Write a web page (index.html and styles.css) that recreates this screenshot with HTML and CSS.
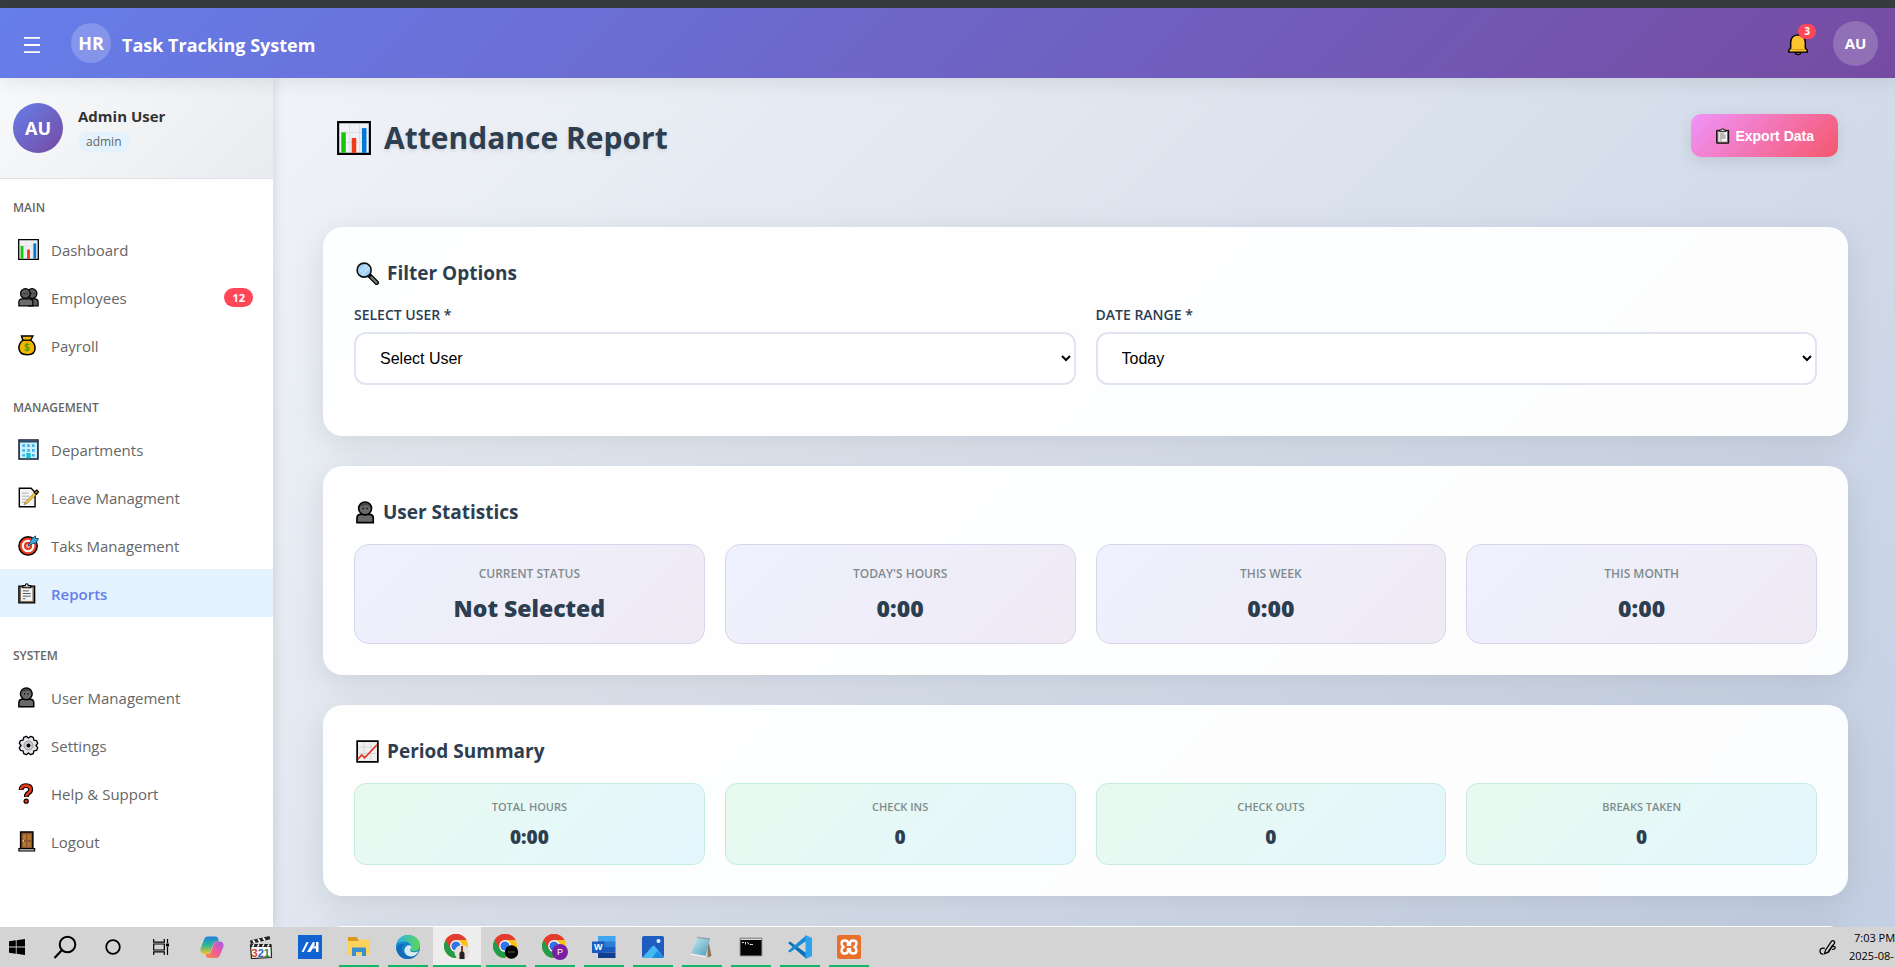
FILE: index.html
```html
<!DOCTYPE html>
<html lang="en">
<head>
<meta charset="utf-8">
<title>Attendance Report</title>
<link rel="stylesheet" href="styles.css">
</head>
<body>
<svg class="sprite" aria-hidden="true">
  <defs>
    <linearGradient id="g-edge" x1="0" y1="0" x2="1" y2="1"><stop offset="0" stop-color="#1b9de2"/><stop offset="1" stop-color="#0c59a4"/></linearGradient>
    <linearGradient id="g-edge2" x1="0" y1="0" x2="1" y2="0"><stop offset="0" stop-color="#2bb3e6"/><stop offset="1" stop-color="#5fd65a"/></linearGradient>
    <linearGradient id="g-cop1" x1="0" y1="0" x2="0" y2="1"><stop offset="0" stop-color="#1d7fe0"/><stop offset=".5" stop-color="#2fb98f"/><stop offset="1" stop-color="#f4c32c"/></linearGradient>
    <linearGradient id="g-cop2" x1="1" y1="0" x2="0" y2="1"><stop offset="0" stop-color="#a55bf0"/><stop offset=".5" stop-color="#ee5c9b"/><stop offset="1" stop-color="#f98b3c"/></linearGradient>
    <linearGradient id="g-note" x1="0" y1="0" x2="1" y2="1"><stop offset="0" stop-color="#c9ecf5"/><stop offset="1" stop-color="#4a9bb5"/></linearGradient>
  </defs>
  <symbol id="i-bars" viewBox="0 0 24 24"><path d="M.8.8h22.400v22.400H.8z" fill="#f0f2f6" stroke="#000" stroke-width="1.500"/><path d="M2 8h20M2 15h20M9 2v20M16 2v20" stroke="#dadde3" stroke-width=".7"/><path d="M3 8h3.200v14.500H3z" fill="#16c60c"/><path d="M10.400 12h3.200v10.500h-3.200z" fill="#f03a17"/><path d="M17.600 5h3.200v17.500h-3.200z" fill="#0078d7"/></symbol>
  <symbol id="i-users" viewBox="0 0 24 24"><g fill="#5b5b5b" stroke="#000" stroke-width="1.400"><circle cx="16" cy="7.500" r="5.600"/><path d="M12 21.500V17q0-3.500 3.500-3.500H19q4 0 4 4v4z"/><circle cx="8.500" cy="7.500" r="5.600"/><path d="M1 21.500v-4q0-4 4-4h8q4 0 4 4v4z" fill="#6c6c6c"/></g><path d="M7 7v1M10.500 7v1M15.500 7v1M18.500 7v1" stroke="#000" stroke-width="1.200"/></symbol>
  <symbol id="i-user" viewBox="2 0 24 24"><g fill="#696969" stroke="#000" stroke-width="1.700"><path d="M3 22.500V18q0-4 4-4h9q4 0 4 4v4.500z"/><circle cx="11.500" cy="7.800" r="6.700"/></g><path d="M5.500 6q2-4 6-4t6 5l-3.500-3z" fill="#444"/><path d="M9.500 7v1.600M13.500 7v1.600" stroke="#000" stroke-width="1.400"/></symbol>
  <symbol id="i-money" viewBox="1 0 24 24"><path d="M6.500 6 5 1.200h13L15.500 6q5 3.500 5 9 0 7.500-9 7.500t-9.500-7.500Q2 9.500 6.500 6z" fill="#f4b400" stroke="#000" stroke-width="1.700"/><path d="M6.500 6h9" stroke="#000" stroke-width="1.500"/><path d="M14 11.500q-1-1.500-3-1.300-2.200.4-2 2 .3 1.300 2.300 1.600 2.600.4 2.500 2.100-.3 1.800-2.700 1.700-1.800 0-2.600-1.400M11.200 8.800v10" fill="none" stroke="#3a9a14" stroke-width="1.200"/></symbol>
  <symbol id="i-building" viewBox="0 0 24 24"><path d="M1.200 1.200h21.600v21.600H1.200z" fill="#cdeefc" stroke="#111c35" stroke-width="1.800"/><path d="M2 2h20v2H2z" fill="#28486c"/><path d="M5 6h3v3H5zm5.500 0h3v3h-3zM16 6h3v3h-3zM5 11.500h3v3H5zm5.500 0h3v3h-3zm5.500 0h3v3h-3zM5 17h3v3H5zm11 0h3v3h-3z" fill="#3fb5ee"/><path d="M9.500 16h5v6h-5z" fill="#15c3cf"/></symbol>
  <symbol id="i-memo" viewBox="0 0 24 24"><path d="M1.500 1.500H15L19.500 6v16.500h-18z" fill="#f5f5f5" stroke="#000" stroke-width="1.600"/><path d="M4.500 7H12M4.500 10.500H13M4.500 14H11M4.500 17.500H9" stroke="#aaa" stroke-width="1"/><path d="M8 17.500 20 5.500 22 7.500 10 19 7 20z" fill="#f6cf3e" stroke="#7a5c14" stroke-width=".7"/><path d="m18.500 6 3-2.500 2 2L21 8.500z" fill="#d9822b" stroke="#000" stroke-width="1.300"/></symbol>
  <symbol id="i-target" viewBox="0 0 24 24"><circle cx="11.500" cy="12.500" r="10.500" fill="#e93a20" stroke="#000" stroke-width="1.600"/><circle cx="11.500" cy="12.500" r="7.200" fill="#fff"/><circle cx="11.500" cy="12.500" r="4.700" fill="#e93a20"/><circle cx="11.500" cy="12.500" r="2" fill="#fff"/><path d="m11 13 5-9 4-3v3h3.500l-3 5-4 1z" fill="#35a8dd" stroke="#17445e" stroke-width="1"/></symbol>
  <symbol id="i-clip" viewBox="1 0 24 24"><path d="M2 3.500h18v19.300H2z" fill="#7d6a5a" stroke="#000" stroke-width="1.500"/><path d="M4.500 5.500h13v15h-13z" fill="#f5f5f5"/><path d="M6.500 5.500V3h2.700q.2-2.200 1.800-2.200T12.800 3h2.700v2.500z" fill="#ccc" stroke="#000" stroke-width="1.200"/><path d="M6.500 9h7M6.500 12h9M6.500 15h9M6.500 18h3" stroke="#555" stroke-width="1.100"/></symbol>
  <symbol id="i-gear" viewBox="0 0 24 24"><path d="m9.500 1.500 2.500 2 2.500-2 3 1.200.6 3.100 3.200.700L22.500 9.500l-2 2.500 2 2.500-1.200 3-3.200.7-.6 3.100-3 1.200-2.500-2-2.500 2-3-1.200-.7-3.100-3.100-.7-1.200-3 2-2.500-2-2.500 1.200-3 3.100-.7.700-3.100z" fill="#e2e4e7" stroke="#000" stroke-width="1.500" stroke-linejoin="round"/><circle cx="12" cy="12" r="5.200" fill="#c9ccd1" stroke="#888" stroke-width=".9"/><circle cx="12" cy="12" r="2.300"/></symbol>
  <symbol id="i-help" viewBox="2 0 24 24"><path d="M5.500 8q0-5 5.500-5t5.500 4.500q0 2.500-2.700 4-2.300 1.300-2.300 4.500" fill="none" stroke="#000" stroke-width="5.600"/><circle cx="11.300" cy="20.800" r="3"/><path d="M5.500 7.500q.2-4.500 5.500-4.500t5.500 4.500q0 2.500-2.700 4-2.300 1.300-2.300 3.800" fill="none" stroke="#e8391c" stroke-width="3"/><circle cx="11.300" cy="20.800" r="1.700" fill="#e8391c"/></symbol>
  <symbol id="i-door" viewBox="1 0 24 24"><path d="M4 1.200h14v19H4z" fill="#8e562e" stroke="#000" stroke-width="1.700"/><path d="M6.500 4h3.700v6H6.500zm5.300 0h3.700v6h-3.700zM6.500 12.500h3.700v5.500H6.500zm5.300 0h3.700v5.500h-3.700z" fill="#b57a2a"/><circle cx="7" cy="11.200" r="1" fill="#ffd34d"/><path d="M2 20h18v2.800H2z" fill="#aaa" stroke="#000" stroke-width="1.300"/></symbol>
  <symbol id="i-search" viewBox="0 0 24 24"><path d="m14 14 7.500 7.500" stroke="#000" stroke-width="5" stroke-linecap="round"/><path d="m16 16 5.500 5.500" stroke="#6b7a6f" stroke-width="2.400" stroke-linecap="round"/><circle cx="8.500" cy="8.500" r="7.300" fill="#9fd0f5" stroke="#111" stroke-width="1.700"/><path d="m3.500 11 8-8M6 13.500l8-8" stroke="#c9e5fa" stroke-width="1.500"/></symbol>
  <symbol id="i-trend" viewBox="0 0 24 24"><path d="M1.200 1.200h21.600v21.600H1.200z" fill="#f0f0f0" stroke="#000" stroke-width="1.800"/><path d="M2 7.500h20M2 14h20M8.500 2v20M15.500 2v20" stroke="#d5d5d5" stroke-width="1"/><path d="m2 20 4-4.500 3 3L22 5" fill="none" stroke="#e3311d" stroke-width="1.700"/></symbol>
  <symbol id="i-bell" viewBox="0 0 24 24"><path d="M9 20.500q0 2.500 3 2.500t3-2.500z" fill="#b5720d" stroke="#000" stroke-width="1.300"/><path d="M2 20.300v-2l2-2.300V9.500Q4.500 2 12 1.500 19.500 2 20 9.500V16l2 2.300v2z" fill="#fdc42f" stroke="#000" stroke-width="1.600"/><path d="M3.500 17.500h17" stroke="#d69a16" stroke-width="1.200"/></symbol>
  <symbol id="i-chrome" viewBox="0 0 24 24"><circle cx="12" cy="12" r="12" fill="#fbc116"/><path d="M12 12 1.600 6A12 12 0 0 1 22.400 6z" fill="#e33b2e"/><path d="M12 12 1.600 6A12 12 0 0 0 12 24l5.200-9z" fill="#229b4b"/><path d="M12 6h10.400L17 14.500z" fill="#fbc116"/><path d="M12 6.200V6h10.400A12 12 0 0 0 1.600 6l5.200 9z" fill="#e33b2e"/><circle cx="12" cy="12" r="5.900" fill="#fff"/><circle cx="12" cy="12" r="4.600" fill="#2f75e4"/></symbol>
</svg>

<div class="app">
  <div class="window-edge"></div>
  <header class="topbar">
    <button class="menu-button" type="button" aria-label="Toggle menu"><svg viewBox="0 0 20 20"><path d="M1 2h18M1 10h18M1 18h18" stroke="#fff" stroke-width="2"/></svg></button>
    <span class="logo">HR</span>
    <span class="brand">Task Tracking System</span>
    <div class="topbar-actions">
      <button class="bell-button" type="button" aria-label="Notifications"><svg><use href="#i-bell"/></svg><span class="bell-count">3</span></button>
      <button class="account-button" type="button">AU</button>
    </div>
  </header>

  <div class="body">
    <aside class="sidebar">
      <div class="profile">
        <span class="profile-avatar">AU</span>
        <div class="profile-text"><span class="profile-name">Admin User</span><span class="profile-role">admin</span></div>
      </div>
      <nav class="nav">
        <section class="nav-section">
          <h2 class="nav-title">MAIN</h2>
          <a class="nav-link" href="#"><svg><use href="#i-bars"/></svg>Dashboard</a>
          <a class="nav-link" href="#"><svg><use href="#i-users"/></svg>Employees<span class="nav-badge">12</span></a>
          <a class="nav-link" href="#"><svg><use href="#i-money"/></svg>Payroll</a>
        </section>
        <section class="nav-section">
          <h2 class="nav-title">MANAGEMENT</h2>
          <a class="nav-link" href="#"><svg><use href="#i-building"/></svg>Departments</a>
          <a class="nav-link" href="#"><svg><use href="#i-memo"/></svg>Leave Managment</a>
          <a class="nav-link" href="#"><svg><use href="#i-target"/></svg>Taks Management</a>
          <a class="nav-link active" href="#"><svg><use href="#i-clip"/></svg>Reports</a>
        </section>
        <section class="nav-section">
          <h2 class="nav-title">SYSTEM</h2>
          <a class="nav-link" href="#"><svg><use href="#i-user"/></svg>User Management</a>
          <a class="nav-link" href="#"><svg><use href="#i-gear"/></svg>Settings</a>
          <a class="nav-link" href="#"><svg><use href="#i-help"/></svg>Help &amp; Support</a>
          <a class="nav-link" href="#"><svg><use href="#i-door"/></svg>Logout</a>
        </section>
      </nav>
    </aside>

    <main class="main">
      <div class="page-head">
        <h1 class="page-title"><svg><use href="#i-bars"/></svg>Attendance Report</h1>
        <button class="export-button" type="button"><svg><use href="#i-clip"/></svg>Export Data</button>
      </div>

      <section class="card">
        <h2 class="card-title"><svg><use href="#i-search"/></svg>Filter Options</h2>
        <div class="filters">
          <div class="field"><label for="user">SELECT USER *</label><select id="user"><option>Select User</option></select></div>
          <div class="field"><label for="range">DATE RANGE *</label><select id="range"><option>Today</option></select></div>
        </div>
      </section>

      <section class="card">
        <h2 class="card-title person"><svg><use href="#i-user"/></svg>User Statistics</h2>
        <div class="tiles">
          <div class="tile"><span class="tile-label">CURRENT STATUS</span><span class="tile-value">Not Selected</span></div>
          <div class="tile"><span class="tile-label">TODAY'S HOURS</span><span class="tile-value">0:00</span></div>
          <div class="tile"><span class="tile-label">THIS WEEK</span><span class="tile-value">0:00</span></div>
          <div class="tile"><span class="tile-label">THIS MONTH</span><span class="tile-value">0:00</span></div>
        </div>
      </section>

      <section class="card">
        <h2 class="card-title"><svg><use href="#i-trend"/></svg>Period Summary</h2>
        <div class="tiles">
          <div class="tile summary"><span class="tile-label">TOTAL HOURS</span><span class="tile-value">0:00</span></div>
          <div class="tile summary"><span class="tile-label">CHECK INS</span><span class="tile-value">0</span></div>
          <div class="tile summary"><span class="tile-label">CHECK OUTS</span><span class="tile-value">0</span></div>
          <div class="tile summary"><span class="tile-label">BREAKS TAKEN</span><span class="tile-value">0</span></div>
        </div>
      </section>

      <section class="card"></section>
    </main>
  </div>

  <footer class="taskbar">
    <div class="task-system">
      <button class="task" type="button" aria-label="Start"><svg class="s16" viewBox="0 0 16 16"><path d="M0 2.300 6.800 1.300v6.200H0zM7.600 1.200 16 0v7.500H7.600zM0 8.400h6.800v6.300L0 13.700zM7.600 8.400H16V16l-8.400-1.200z"/></svg></button>
      <button class="task" type="button" aria-label="Search"><svg viewBox="0 0 24 24"><circle cx="14.500" cy="9.500" r="7.800" fill="none" stroke="#000" stroke-width="2"/><path d="m9 15-7.500 8" stroke="#000" stroke-width="2.200"/></svg></button>
      <button class="task" type="button" aria-label="Assistant"><svg class="s16" viewBox="0 0 16 16"><circle cx="8" cy="8" r="6.800" fill="none" stroke="#000" stroke-width="1.800"/></svg></button>
      <button class="task" type="button" aria-label="Task view"><svg class="s16" viewBox="0 0 16 16"><path d="M.7 0v3.200h10.600V0M.7 16v-3.200h10.600V16M.7 5h10.600v6H.7zM14.500 0v4M14.500 8v8" fill="none" stroke="#000" stroke-width="1.200"/><path d="M13 4.500h3v3h-3z"/></svg></button>
    </div>
    <div class="task-apps">
      <button class="task" type="button" aria-label="Copilot"><svg viewBox="0 0 24 24"><path d="M8 1.500h7.500q2 0 2.600 2L19 6.500h-2.500q-2.500 0-3.300 2.500l-2.400 7.500q-.8 2.500-3.300 2.500H4Q0 18.500.5 14L4 4.500Q5 1.500 8 1.500z" fill="url(#g-cop1)"/><path d="M16 23H8.500q-2 0-2.600-2L5.500 19H8q2.500 0 3.300-2.500l2.200-7.500q.8-2.500 3.300-2.500H20q4 .5 3.500 5L20 20q-1 3-4 3z" fill="url(#g-cop2)"/></svg></button>
      <button class="task" type="button" aria-label="Media player"><svg viewBox="0 0 24 24"><path d="M1.500 10h20.500l.5 12.500-20 1z" fill="#fff" stroke="#222" stroke-width="1.200"/><path d="M1 5.500 20.500 1l.7 3.200L1.800 9z" fill="#222"/><path d="m4 5 2 3M9 3.800l2 3M14 2.600l2 3" stroke="#fff" stroke-width="1.800"/><path d="M1.500 9h20.700v3H1.500z" fill="#222"/><path d="m5 9.300-1.500 2.400M10 9.300l-1.500 2.400M15 9.300l-1.500 2.400M20 9.300l-1.500 2.400" stroke="#fff" stroke-width="1.600"/><text x="2.500" y="21.500" font-size="11" font-weight="700" font-family="Liberation Sans, sans-serif"><tspan fill="#d8401f">3</tspan><tspan fill="#2b62c4">2</tspan><tspan fill="#1d8d48">1</tspan></text></svg></button>
      <button class="task" type="button" aria-label="MyASUS"><svg viewBox="0 0 24 24"><path d="M0 0h24v24H0z" fill="#1262d2"/><path d="m3.500 17 5-10h2.200l-5 10zM9 17l6-10h1.500v3.500L12.500 17zM18 7h2.500v10H18v-3.500h-3l1.500-2.200H18z" fill="#fff"/></svg></button>
      <button class="task open" type="button" aria-label="File Explorer"><svg viewBox="0 0 24 24"><path d="M1 2h8.500l2 3H22v5H1z" fill="#d99a1d"/><path d="M1 6h10l1.500-1.500H23V20H1z" fill="#fbd25a"/><path d="M5 21v-7.500q0-1 1-1h12q1 0 1 1V21h-4v-4H9v4z" fill="#3a8fd2"/></svg></button>
      <button class="task open" type="button" aria-label="Edge"><svg viewBox="0 0 24 24"><circle cx="12" cy="12" r="12" fill="url(#g-edge)"/><path d="M1 8Q4 0 12 0q11 .5 12 10 0 6-6 6.500-4.500 0-4-2.200 1.800-1.500 1-3.800Q13.500 7 9 6.500 4 6 1 8z" fill="url(#g-edge2)"/><path d="M14 14.300q-.8 3 4.500 3 2.500-.2 4.200-1.300-2 4.700-6.500 5.500-5.500.5-7.700-4.500-1-4 3-6.500 2.700-1 3.800 1 .4 1.600-1.300 2.800z" fill="#d6eaf2"/><path d="M8.500 9Q4 12 6.500 17.500 9 22.500 15 23.500 4 26 .5 15-.5 8 8.500 9z" fill="#136bbb"/></svg></button>
      <button class="task open current" type="button" aria-label="Chrome"><svg class="s26" viewBox="0 0 26 26"><svg width="24" height="24"><use href="#i-chrome"/></svg><circle cx="18" cy="18.500" r="7.500" fill="#e7dfdc"/><path d="M15.500 25v-6l2.500-3 2.500 3v6z" fill="#222"/><path d="M18 12v6" stroke="#7b3f2a" stroke-width="2"/></svg></button>
      <button class="task open" type="button" aria-label="Chrome, second profile"><svg class="s26" viewBox="0 0 26 26"><svg width="24" height="24"><use href="#i-chrome"/></svg><circle cx="18.500" cy="18" r="6.700" fill="#050505"/><path d="M15 18h7" stroke="#777" stroke-width="1.200" stroke-dasharray="1.500 .6"/></svg></button>
      <button class="task open" type="button" aria-label="Chrome, third profile"><svg class="s26" viewBox="0 0 26 26"><svg width="24" height="24"><use href="#i-chrome"/></svg><circle cx="18" cy="18" r="8" fill="#7b1fa2"/><text x="18" y="21.300" text-anchor="middle" font-size="9" fill="#fff" font-family="Liberation Sans, sans-serif">P</text></svg></button>
      <button class="task open" type="button" aria-label="Word"><svg viewBox="0 0 24 24"><path d="M6 1h17.500v6H6z" fill="#41a5ee"/><path d="M6 6.500h17.500V12H6z" fill="#2b7cd3"/><path d="M6 12h17.500v5.500H6z" fill="#185abd"/><path d="M6 17.500h17.500V23H6z" fill="#103f91"/><path d="M0 6.500h12.500V18H0z" fill="#1b5cbe"/><text x="6.200" y="15.400" text-anchor="middle" font-size="9" font-weight="700" fill="#fff" font-family="Liberation Sans, sans-serif">W</text></svg></button>
      <button class="task open" type="button" aria-label="Photos"><svg viewBox="0 0 24 24"><rect x="1" y="1" width="22" height="22" rx="2" fill="#1f5cc0"/><path d="m2 22 9-10.500q1.500-1.500 3 0L22.500 22q-.5 1-1.500 1H3q-1 0-1-1z" fill="#43b8f3"/><path d="m11 23 5-7 6.500 6-1 1z" fill="#1f8ddd"/><circle cx="17.500" cy="6" r="2" fill="#e5f4ff"/></svg></button>
      <button class="task open" type="button" aria-label="Notepad"><svg viewBox="0 0 24 24"><path d="m18 4 3.500 17-4 1.500z" fill="#8a7758"/><path d="M7.500 2.500 20 4l-4.500 17L1 18.500z" fill="url(#g-note)"/><path d="M1 18.500 15.500 21l-.3 1.300L1 19.800z" fill="#f2f2f2"/><path d="m7.500 2.500 12.500 1.500" stroke="#777" stroke-width="1.500" stroke-dasharray="1 1"/></svg></button>
      <button class="task open" type="button" aria-label="Command Prompt"><svg viewBox="0 0 24 24"><path d="M1 3h22v18H1z" fill="#050505" stroke="#999" stroke-width="1"/><path d="M1.500 3.500h21V5h-21z" fill="#ddd"/><path d="M3 7.500h2M6.500 7v2.500M8.500 7l1.500 2.500M11 9.500h3" stroke="#ddd" stroke-width="1"/></svg></button>
      <button class="task open" type="button" aria-label="Visual Studio Code"><svg viewBox="0 0 24 24"><path d="m0 8 2-1.500L18 18v5.500z" fill="#0b70b8"/><path d="m0 16 2 1.500L18 6V.5z" fill="#1a8ad4"/><path d="m17.500 0 6.500 3v18l-6.500 3z" fill="#2ba3ee"/></svg></button>
      <button class="task open" type="button" aria-label="XAMPP"><svg viewBox="0 0 24 24"><rect width="24" height="24" rx="2.500" fill="#e9702a"/><path d="M8 5.500q-3.500 0-3.500 3 0 2 2 3.500-2 1.500-2 3.500 0 3 3.500 3 3 0 3-3v-1.200h2v1.200q0 3 3 3 3.500 0 3.500-3 0-2-2-3.500 2-1.500 2-3.500 0-3-3.500-3-3 0-3 3v1.200h-2V8.500q0-3-3-3z" fill="none" stroke="#fff" stroke-width="2.400"/></svg></button>
    </div>
    <div class="tray">
      <button class="ink-button" type="button" aria-label="Ink workspace"><svg viewBox="0 0 16 16"><path d="m5.200 13.800.9-3.300 5.400-8q1.200-1.500 2.500-.6 1.200 1 .3 2.500l-5.400 8zM5.500 8.800Q.9 8 .9 11.500q.2 2.800 3.100 2.700M8.200 12.500 13 5.500M12.500 7q3-.5 2.700 1.300-.3 1.700-2.900 1.500" fill="none" stroke="#000" stroke-width="1.200"/></svg></button>
      <div class="clock"><span class="clock-time">7:03 PM</span><span>2025-08-</span></div>
    </div>
  </footer>
</div>
</body>
</html>
```

FILE: styles.css
```css
* { box-sizing: border-box; }

body {
  margin: 0;
  font-family: "Open Sans", "Noto Sans", sans-serif;
  color: #2c3e50;
}

h1, h2 { margin: 0; }
button { border: 0; padding: 0; background: none; font: inherit; color: inherit; cursor: pointer; }
svg { display: block; flex: none; }
.sprite { position: absolute; width: 0; height: 0; }

.app { display: flex; flex-direction: column; height: 100vh; overflow: hidden; }
.window-edge { flex: none; height: 8px; background: #363d3f; }

/* Top bar */
.topbar {
  flex: none;
  display: flex;
  align-items: center;
  height: 70px;
  padding: 0 17px 0 22px;
  background: linear-gradient(135deg, #667eea 0%, #764ba2 100%);
  box-shadow: 0 2px 20px rgba(0, 0, 0, 0.1);
  color: #fff;
  z-index: 2;
}
.menu-button { padding-top: 3px; }
.menu-button svg { width: 20px; height: 18px; }
.logo {
  display: grid;
  place-items: center;
  width: 40px;
  height: 40px;
  margin-left: 29px;
  border-radius: 50%;
  background: rgba(255, 255, 255, 0.2);
  font-size: 18px;
  font-weight: 700;
}
.brand { margin-left: 11px; padding-top: 3px; font-size: 18px; font-weight: 700; }
.topbar-actions { display: flex; align-items: center; gap: 24px; margin-left: auto; }
.bell-button { position: relative; padding-top: 3px; }
.bell-button svg { width: 22px; height: 23px; }
.bell-count {
  position: absolute;
  top: -6px;
  right: -7px;
  width: 18px;
  border-radius: 8px;
  background: #ff4757;
  font-size: 10px;
  font-weight: 700;
  line-height: 15px;
  text-align: center;
}
.account-button {
  width: 45px;
  height: 45px;
  border-radius: 50%;
  background: rgba(255, 255, 255, 0.2);
  font-size: 15px;
  font-weight: 700;
}

.body {
  flex: 1;
  display: flex;
  min-height: 0;
  background: linear-gradient(135deg, #f5f7fa 0%, #c3cfe2 100%);
}

/* Sidebar */
.sidebar {
  flex: none;
  width: 273px;
  background: #fff;
  box-shadow: 2px 0 10px rgba(0, 0, 0, 0.1);
  overflow: hidden;
  z-index: 1;
}
.profile {
  display: flex;
  align-items: center;
  gap: 15px;
  padding: 25px 13px;
  border-bottom: 1px solid #dee2e6;
  background: linear-gradient(135deg, #f8f9fa 0%, #e9ecef 100%);
}
.profile-avatar {
  display: grid;
  place-items: center;
  width: 50px;
  height: 50px;
  border-radius: 50%;
  background: linear-gradient(135deg, #667eea 0%, #764ba2 100%);
  color: #fff;
  font-size: 18px;
  font-weight: 700;
}
.profile-text { display: flex; flex-direction: column; align-items: flex-start; gap: 5px; }
.profile-name { font-size: 15px; font-weight: 700; line-height: 22px; color: #333; }
.profile-role {
  padding: 0 8px;
  border-radius: 10px;
  background: #e3f2fd;
  color: #666;
  font-size: 12px;
  line-height: 20px;
}
.nav { display: flex; flex-direction: column; gap: 20px; padding-top: 10px; }
.nav-title { padding: 9px 13px 7px; font-size: 12px; font-weight: 600; line-height: 20px; color: #666; }
.nav-link {
  display: flex;
  align-items: center;
  gap: 12px;
  height: 48px;
  padding: 2px 20px 0 18px;
  color: #666;
  font-size: 15px;
  text-decoration: none;
}
.nav-link svg { width: 21px; height: 21px; margin-bottom: 2px; }
.nav-link.active { background: #e3f2fd; color: #667eea; font-weight: 600; }
.nav-badge {
  margin: 0 0 2px auto;
  padding: 0 8px;
  border-radius: 10px;
  background: #ff4757;
  color: #fff;
  font-size: 11px;
  font-weight: 700;
  line-height: 19px;
}

/* Page */
.main {
  flex: 1;
  display: flex;
  flex-direction: column;
  gap: 30px;
  padding: 30px 47px 30px 50px;
  overflow-y: auto;
  scrollbar-width: none;
}
.page-head {
  display: flex;
  align-items: flex-start;
  justify-content: space-between;
  height: 89px;
  padding: 6px 10px 0 14px;
  flex: none;
}
.page-title {
  display: flex;
  align-items: center;
  gap: 13px;
  font-size: 30px;
  font-weight: 700;
  line-height: 48px;
  text-shadow: 0 2px 4px rgba(0, 0, 0, 0.1);
}
.page-title svg { width: 34px; height: 34px; }
.export-button {
  display: flex;
  align-items: center;
  gap: 3px;
  height: 43px;
  padding: 0 24px 0 25px;
  border-radius: 10px;
  background: linear-gradient(135deg, #f093fb 0%, #f5576c 100%);
  box-shadow: 0 4px 15px rgba(0, 0, 0, 0.1);
  color: #fff;
  font-family: "Liberation Sans", Arial, sans-serif;
  font-size: 14px;
  font-weight: 700;
}
.export-button svg { width: 16px; height: 16px; }

.card {
  flex: none;
  min-height: 120px;
  padding: 30px;
  border: 1px solid rgba(255, 255, 255, 0.2);
  border-radius: 20px;
  background: rgba(255, 255, 255, 0.95);
  box-shadow: 0 8px 32px rgba(0, 0, 0, 0.1);
}
.card-title {
  display: flex;
  align-items: center;
  gap: 8px;
  margin-bottom: 17px;
  padding-left: 2px;
  font-size: 19px;
  font-weight: 700;
  line-height: 30px;
}
.card-title svg { width: 23px; height: 23px; }
.card-title.person { gap: 4px; }

.filters { display: grid; grid-template-columns: 1fr 1fr; gap: 20px; margin-bottom: 20px; }
.field { display: flex; flex-direction: column; gap: 7px; }
.field label { font-size: 14px; font-weight: 600; line-height: 20px; }
.field select {
  height: 53px;
  padding: 0 20px;
  border: 2px solid #e0e4f0;
  border-radius: 12px;
  background: #fff;
  color: #000;
  font-family: "Liberation Sans", Arial, sans-serif;
  font-size: 16px;
}

.tiles { display: grid; grid-template-columns: repeat(4, 1fr); gap: 20px; }
.tile {
  display: flex;
  flex-direction: column;
  align-items: center;
  gap: 8px;
  padding: 19px;
  border: 1px solid #d9d4ec;
  border-radius: 15px;
  background: linear-gradient(135deg, #eef1fe 0%, #efeaf4 100%);
}
.tile-label { color: #7f8c8d; font-size: 12px; font-weight: 600; line-height: 20px; }
.tile-value { font-size: 23px; font-weight: 800; line-height: 32px; }
.tile.summary {
  padding: 14px;
  border-color: #c5ebe0;
  border-radius: 12px;
  background: linear-gradient(135deg, #e8faee 0%, #e4f6fe 100%);
}
.summary .tile-label { font-size: 11px; line-height: 18px; }
.summary .tile-value { font-size: 19px; line-height: 26px; }

/* Taskbar */
.taskbar { flex: none; display: flex; height: 40px; background: #d4d4d4; color: #000; z-index: 3; }
.task-system { display: flex; margin-left: -7px; }
.task-apps { display: flex; gap: 1px; margin-left: 3px; }
.task { display: grid; place-items: center; width: 48px; height: 40px; }
.task svg { width: 24px; height: 24px; }
.task .s16 { width: 16px; height: 16px; }
.task .s26 { width: 26px; height: 26px; }
.task.open { background: linear-gradient(#10b867, #10b867) center bottom / 40px 2px no-repeat; }
.task.open.current { background: linear-gradient(#10b867, #10b867) center bottom / 48px 2px no-repeat #ededed; }
.tray { display: flex; align-items: center; gap: 13px; margin-left: auto; }
.ink-button svg { width: 17px; height: 17px; }
.clock { display: flex; flex-direction: column; width: 46px; overflow: hidden; font-size: 11px; line-height: 18px; white-space: nowrap; }
.clock-time { padding-left: 5px; }
```
